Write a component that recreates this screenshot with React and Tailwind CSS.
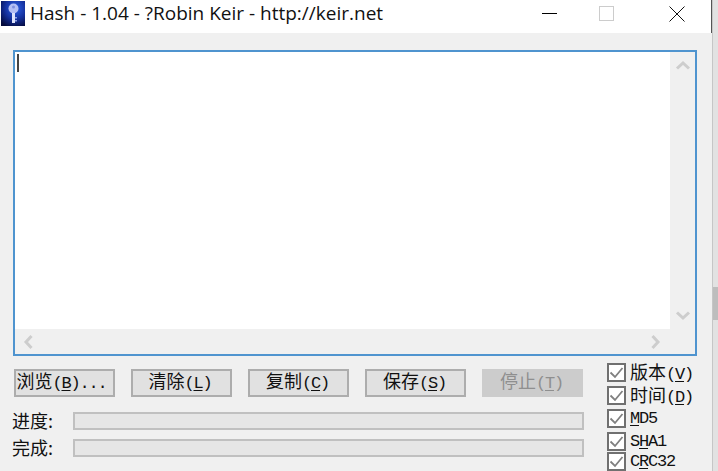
import React from "react";

const Mono = ({ children, className }) => (
    <span className={`font-['Liberation_Mono',monospace] text-[17px] tracking-[-1.2px] ${className || ""}`}>{children}</span>
);

const Key = ({ children }) => <span className="underline underline-offset-2">{children}</span>;

// caption in the old dialog style: big CJK, small fixed latin, underlined accelerator
const Caption = ({ cjk, keyName, tail }) => (
    <span className="font-['Noto_Sans_CJK_SC',sans-serif] text-[18px] leading-none whitespace-nowrap">
        {cjk}
        {keyName && (
            <Mono>
                (<Key>{keyName}</Key>){tail}
            </Mono>
        )}
    </span>
);

const DlgButton = ({ cjk, keyName, tail, disabled, className }) => (
    <button
        type="button"
        className={`h-[28px] w-[101px] flex items-center justify-center border-2 pb-[3px] ${
            disabled
                ? "bg-[#cccccc] border-[#cccccc] text-[#8f8f8f]"
                : "bg-[#e1e1e1] border-[#adadad] text-[#111111]"
        } ${className || ""}`}
    >
        <Caption cjk={cjk} keyName={keyName} tail={tail} />
    </button>
);

const Check = ({ children, className }) => (
    <label className={`flex items-center gap-[4px] h-[19px] text-[#111111] ${className || ""}`}>
        <span className="w-[19px] h-[19px] shrink-0 border-2 border-[#707070] bg-white flex items-center justify-center">
            <svg width="15" height="13" viewBox="0 0 15 13" fill="none">
                <path d="M1.5 6.5 L6 11 L13.5 2" stroke="#808080" strokeWidth="1.8" />
            </svg>
        </span>
        {children}
    </label>
);

const Chevron = ({ d }) => (
    <svg width="16" height="16" viewBox="0 0 16 16" fill="none">
        <path d={d} stroke="#cdcdcd" strokeWidth="3" />
    </svg>
);

const KeyIcon = () => (
    <svg width="24" height="25" viewBox="0 0 24 25">
        <defs>
            <radialGradient id="keybg" cx="0.6" cy="0.3" r="0.8">
                <stop offset="0" stopColor="#2f62e8" />
                <stop offset="0.55" stopColor="#14309c" />
                <stop offset="1" stopColor="#040a3c" />
            </radialGradient>
        </defs>
        <rect width="24" height="25" fill="url(#keybg)" />
        <circle cx="12.5" cy="7.5" r="5" fill="#b4bff4" />
        <circle cx="12.5" cy="6" r="1.5" fill="#7f90e0" />
        <path d="M11 12h3v10h-3z" fill="#dfe4fc" />
        <path d="M14 16h2v1.5h-2zM14 19h2v1.5h-2z" fill="#8ea1e8" />
    </svg>
);

export default function App() {
    return (
        <div className="w-[718px] h-[471px] overflow-hidden flex bg-white font-['Noto_Sans','Noto_Sans_CJK_SC',sans-serif]">
            <div className="w-[712px] shrink-0 flex flex-col">
                {/* title bar */}
                <div className="h-[33px] shrink-0 bg-white border-r border-[#555555]">
                    <div className="h-[27px] flex items-center pl-[1px]">
                        <KeyIcon />
                        <span className="ml-[5px] text-[19px] leading-none text-[#111111] whitespace-nowrap font-['Open_Sans',sans-serif]">
                            Hash - 1.04 - ?Robin Keir - http://keir.net
                        </span>
                        <div className="ml-auto flex items-center mr-[26px]">
                            <span className="w-[15px] h-[1px] bg-black" />
                            <span className="ml-[42px] w-[15px] h-[15px] border border-[#cccccc]" />
                            <svg className="ml-[55px]" width="16" height="16" viewBox="0 0 16 16">
                                <path d="M.5.5l15 15M15.5.5l-15 15" stroke="#111111" strokeWidth="1" />
                            </svg>
                        </div>
                    </div>
                </div>

                {/* client area */}
                <div className="flex-1 bg-[#f0f0f0] pt-[17px] pl-[13px] flex flex-col">
                    <div className="h-[306px] w-[684px] shrink-0 border-2 border-[#4f94cf] bg-white flex flex-col">
                        <div className="flex-1 flex min-h-0">
                            <div className="flex-1 pl-[2px] pt-[2px]">
                                <div className="w-[2px] h-[18px] bg-[#444444]" />
                            </div>
                            <div className="w-[25px] bg-[#f0f0f0] flex flex-col items-center justify-between py-[6px]">
                                <Chevron d="M2 10.5 L8 5 L14 10.5" />
                                <Chevron d="M2 5.5 L8 11 L14 5.5" />
                            </div>
                        </div>
                        <div className="h-[25px] shrink-0 bg-[#f0f0f0] flex items-center justify-between pl-[6px] pr-[32px]">
                            <Chevron d="M10.5 2 L5 8 L10.5 14" />
                            <Chevron d="M5.5 2 L11 8 L5.5 14" />
                        </div>
                    </div>

                    <div className="flex">
                        <div className="w-[571px] shrink-0">
                            <div className="flex gap-[16px] pl-[1px] pt-[13px]">
                                <DlgButton cjk="浏览" keyName="B" tail="..." className="pr-[6px]" />
                                <DlgButton cjk="清除" keyName="L" className="pr-[3px]" />
                                <DlgButton cjk="复制" keyName="C" className="pr-[2px]" />
                                <DlgButton cjk="保存" keyName="S" className="pr-[2px]" />
                                <DlgButton cjk="停止" keyName="T" disabled className="pr-[2px]" />
                            </div>
                            <div className="flex items-center h-[18px] mt-[15px] text-[#111111]">
                                <span className="w-[61px] -ml-[1px] pb-[2px] text-[18px] leading-none font-['Noto_Sans_CJK_SC',sans-serif]">进度:</span>
                                <div className="flex-1 h-[18px] bg-[#e6e6e6] border-2 border-[#c0c0c0]" />
                            </div>
                            <div className="flex items-center h-[18px] mt-[9px] text-[#111111]">
                                <span className="w-[61px] -ml-[1px] pb-[2px] text-[18px] leading-none font-['Noto_Sans_CJK_SC',sans-serif]">完成:</span>
                                <div className="flex-1 h-[18px] bg-[#e6e6e6] border-2 border-[#c0c0c0]" />
                            </div>
                        </div>
                        <div className="ml-[23px] pt-[7px] flex flex-col">
                            <Check><Caption cjk="版本" keyName="V" /></Check>
                            <Check className="mt-[4px]"><Caption cjk="时间" keyName="D" /></Check>
                            <Check className="mt-[4px]"><Mono><Key>M</Key>D5</Mono></Check>
                            <Check className="mt-[4px]"><Mono>S<Key>H</Key>A1</Mono></Check>
                            <Check className="mt-[1px]"><Mono>C<Key>R</Key>C32</Mono></Check>
                        </div>
                    </div>
                </div>
            </div>
            {/* edge of the window behind, with its scrollbar thumb */}
            <div className="flex-1 bg-[#e2e2e2] border-l border-[#c6c6c6] pt-[287px]">
                <div className="h-[33px] bg-[#bdbdbd]" />
            </div>
        </div>
    );
}
